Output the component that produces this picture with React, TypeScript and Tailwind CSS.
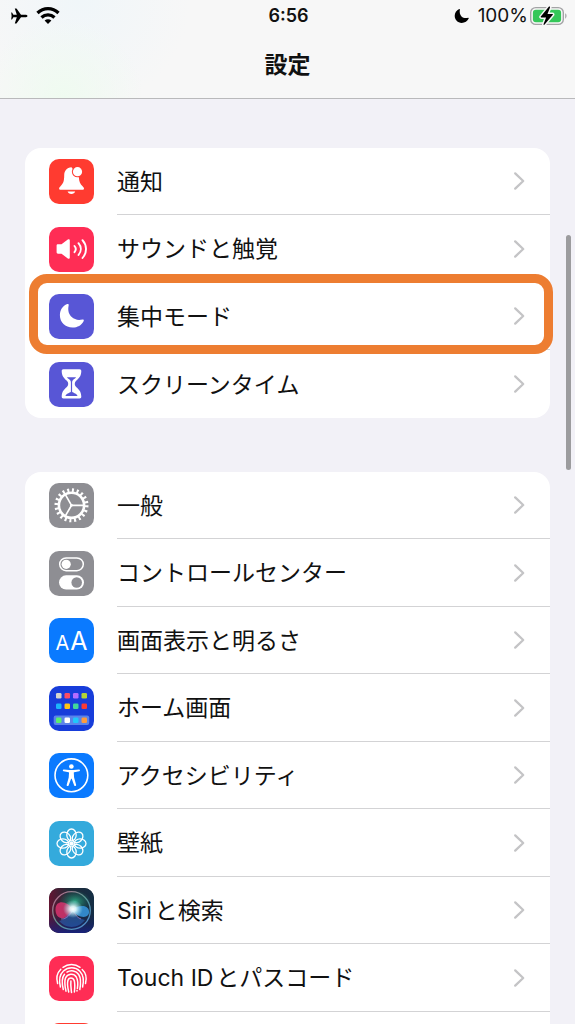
import type { ReactNode } from "react"

type Item = {
  id: string
  label: string
  color: string
  icon: ReactNode
  selected?: boolean
}

const BellIcon = () => (
  <svg viewBox="0 0 45 45" className="size-full" fill="#fff">
    <path d="M22.500 8.300c-4.700 0-7.300 3.700-7.300 8.200 0 6-1.200 8.300-3.700 10.700-1 1-1.400 1.600-1.400 2.300 0 .8.600 1.300 1.500 1.300h21.900c.9 0 1.500-.5 1.500-1.300 0-.7-.5-1.300-1.400-2.300-2.500-2.400-3.500-4.700-3.700-8.700z" />
    <path d="M18.600 32.400h7.600c-.5 1.600-1.900 2.500-3.800 2.500s-3.300-.9-3.800-2.500z" />
    <circle cx="28.500" cy="12.700" r="5.600" fill="#ff3b30" />
    <circle cx="28.500" cy="12.700" r="4.600" />
  </svg>
)

const SpeakerIcon = () => (
  <svg viewBox="0 0 45 45" className="size-full" fill="none" stroke="#fff" strokeWidth="1.900" strokeLinecap="round">
    <path d="M9 17.300h3.500l6.300-4.700c1-.7 2-.2 2 1v16.800c0 1.200-1 1.700-2 1l-6.300-4.700H9c-.9 0-1.400-.5-1.400-1.400v-6.600c0-.9.500-1.400 1.400-1.400z" fill="#fff" stroke="none" />
    <path d="M25.500 19c1.600 1.900 1.600 4.300 0 6.200M29.500 16.200c3.100 3.600 3.100 8.200 0 11.800M33.500 13.200c4.700 5.400 4.700 12.400 0 17.800" />
  </svg>
)

const MoonIcon = () => (
  <svg viewBox="0 0 45 45" className="size-full" fill="#fff">
    <path d="M18.200 10.100c.8-.4 1.700.2 1.500 1.100-1.200 5.300.2 9.100 3 11.900 2.900 2.600 6.500 3.400 10.900 2.400.9-.2 1.500.5 1.100 1.400-2 4.200-6.200 6.600-11.200 6.600-7.200 0-12.600-5.300-12.600-12.300 0-5.100 2.800-9.300 7.300-11.100z" />
  </svg>
)

const HourglassIcon = () => (
  <svg viewBox="0 0 45 45" className="size-full" fill="#fff">
    <path d="M14.500 7.300h16c1.300 0 1.900.8 1.800 2-.1 5.200-2.600 7.200-5.200 9.500-1.800 1.600-1.800 4.700 0 6.300 2.600 2.300 5.100 4.300 5.200 9.500.1 1.200-.5 2-1.800 2h-16c-1.300 0-1.900-.8-1.800-2 .1-5.200 2.600-7.200 5.200-9.500 1.800-1.600 1.800-4.700 0-6.300-2.600-2.300-5.100-4.300-5.200-9.500-.1-1.200.5-2 1.800-2z" />
    <path d="M18 15.300h9c-.5.900-1.500 1.500-2.500 2.300-1.100.9-1.400 1.800-1.400 3v9.200c1.200 1.300 4.700 1.700 5.400 4.200H16.500c.7-2.500 4.200-2.900 5.400-4.200v-9.200c0-1.200-.3-2.100-1.400-3-1-.8-2-1.400-2.500-2.300z" fill="#5856d6" />
  </svg>
)

const GearIcon = () => (
  <svg viewBox="0 0 45 45" className="size-full" fill="none" stroke="#fff">
    <circle cx="22.500" cy="22.300" r="15" strokeWidth="4" strokeDasharray="2 2.712" />
    <circle cx="22.500" cy="22.300" r="12.600" strokeWidth="2.600" />
    <path d="M22.500 22.300h12M22.500 22.300l-6-10.400M22.500 22.300l-6 10.400" strokeWidth="1.700" />
    <circle cx="22.500" cy="22.300" r="1.400" fill="#fff" stroke="none" />
  </svg>
)

const TogglesIcon = () => (
  <svg viewBox="0 0 45 45" className="size-full" fill="#fff">
    <rect x="10.700" y="6.900" width="23.600" height="12.800" rx="6.400" fill="none" stroke="#fff" strokeWidth="1.500" />
    <circle cx="17.200" cy="13.300" r="4.600" />
    <rect x="10" y="24.300" width="25" height="14.300" rx="7.150" />
    <circle cx="27.700" cy="31.450" r="5.300" fill="#8e8e93" />
  </svg>
)

const TextSizeIcon = () => (
  <span className="flex size-full items-baseline justify-center gap-px pt-2 text-white">
    <span className="text-xl leading-[30px]">A</span>
    <span className="text-[25px] leading-[30px]">A</span>
  </span>
)

const appColors = [
  ["#d5d6cf", "#fb4d63", "#b56cff", "#b4d335"],
  ["#1cb5fb", "#ffc414", "#42d69b", "#fb3a34"],
  ["#5bee70", "#ffffff", "#20c6fb", "#ff9b3d"],
]
const appRows = [7, 17.5, 31.5]

const HomeScreenIcon = () => (
  <svg viewBox="0 0 45 45" className="size-full">
    <rect x="4.700" y="29.500" width="35.500" height="9.500" rx="2" fill="#5b83ea" />
    {appColors.map((row, r) =>
      row.map((fill, c) => (
        <rect key={fill} x={7 + c * 8.5} y={appRows[r]} width="5.500" height="5.500" rx="1.300" fill={fill} />
      ))
    )}
  </svg>
)

const AccessibilityIcon = () => (
  <svg viewBox="0 0 45 45" className="size-full" fill="#fff">
    <circle cx="22.400" cy="22.300" r="16.400" fill="none" stroke="#fff" strokeWidth="1.600" />
    <circle cx="22.400" cy="13.500" r="2.300" />
    <path d="M14.800 16.500l5.600.6h4l5.600-.6c1.200-.1 1.300 1.600.2 1.800l-5 .9c-.4.100-.5.300-.4.700l.3 4.500 2 7.300c.4 1.400-1.400 2-1.900.7l-2.500-6.700h-.6l-2.500 6.700c-.5 1.300-2.300.7-1.900-.7l2-7.300.3-4.500c0-.4 0-.6-.4-.7l-5-.9c-1.100-.2-1-1.900.2-1.800z" />
  </svg>
)

const petals = [0, 45, 90, 135, 180, 225, 270, 315]

const FlowerIcon = () => (
  <svg viewBox="0 0 45 45" className="size-full" fill="none" stroke="#fff" strokeWidth="1.300">
    {petals.map((angle) => (
      <ellipse key={angle} cx="22.500" cy="13.900" rx="4.700" ry="5.900" transform={`rotate(${angle} 22.500 22.500)`} />
    ))}
    <circle cx="22.500" cy="22.500" r="2.100" fill="#fff" stroke="none" />
  </svg>
)

const SiriIcon = () => (
  <svg viewBox="0 0 45 45" className="size-full">
    <defs>
      <linearGradient id="siri-bg" x1="0" y1="0" x2="1" y2="0">
        <stop offset="0" stopColor="#641532" />
        <stop offset="0.450" stopColor="#202b38" />
        <stop offset="1" stopColor="#142e45" />
      </linearGradient>
      <linearGradient id="siri-base" x1="0" y1="0" x2="0" y2="1">
        <stop offset="0.550" stopColor="#17195c" stopOpacity="0" />
        <stop offset="1" stopColor="#18208a" stopOpacity="0.800" />
      </linearGradient>
      <linearGradient id="siri-ring" x1="0" y1="0" x2="1" y2="1">
        <stop offset="0" stopColor="#c8628a" />
        <stop offset="0.500" stopColor="#5a9a92" />
        <stop offset="1" stopColor="#4a86dc" />
      </linearGradient>
      <radialGradient id="siri-glow">
        <stop offset="0" stopColor="#fff" />
        <stop offset="0.300" stopColor="#e8ffff" stopOpacity="0.900" />
        <stop offset="1" stopColor="#9ce4f0" stopOpacity="0" />
      </radialGradient>
      <radialGradient id="siri-green">
        <stop offset="0" stopColor="#2fb58c" stopOpacity="0.900" />
        <stop offset="1" stopColor="#1a7060" stopOpacity="0.100" />
      </radialGradient>
    </defs>
    <rect width="45" height="45" fill="url(#siri-bg)" />
    <rect width="45" height="45" fill="url(#siri-base)" />
    <ellipse cx="26" cy="13.500" rx="15" ry="10.500" fill="url(#siri-green)" />
    <path d="M24 22c-5-9-17-11-17.500-1S16 35 24 22z" fill="#ed3676" fillOpacity="0.750" />
    <path d="M22 22c7-5 17-6 18 1s-9 9-18-1z" fill="#3798e0" fillOpacity="0.850" />
    <path d="M10 33c5-1 8-6 13-11 3 6 8 9 13 10-7 9-19 9-26 1z" fill="#2b70cc" fillOpacity="0.500" />
    <path d="M12 31c6 0 9-4 12-9 2 5 5 8 8 9" fill="none" stroke="#c487d4" strokeOpacity="0.600" />
    <ellipse cx="24" cy="21" rx="10" ry="9" fill="url(#siri-glow)" />
    <circle cx="22.500" cy="22.500" r="18.800" fill="none" stroke="url(#siri-ring)" strokeWidth="1.300" />
  </svg>
)

const FingerprintIcon = () => (
  <svg viewBox="0 0 45 45" className="size-full" fill="none" stroke="#fff" strokeWidth="1.500" strokeLinecap="round">
    <path d="M14 11.300C19 7.400 26 7.400 31 11.300M11.800 13.200C8 17 7 22 8.600 27.500M33.200 13.500C37 17 38 22 36.500 27.500" />
    <path d="M11.400 31C9.700 24 10.600 18.500 14.500 15C19.500 10.500 26.500 10.800 30.800 15.200C34.500 19 35 25 33.600 31" />
    <path d="M14.300 33.500C12.700 27 12.500 22 15.500 18.300M18 16.200C22 13.600 27 14.600 29.700 18.500C32 22 31.800 28 30.800 33.500" />
    <path d="M17 35.200C15.800 30 15.300 25 16.500 22C18.500 17.500 24.800 17 27.300 21C29 24 28.900 29 28.400 32.500M28 34.500v.6" />
    <path d="M19.700 36C18.500 31 18.200 27 18.900 24.500C19.800 21 24 21 25.200 24.500C26 27 25.800 32 25.400 36" />
    <path d="M22.500 36.500C22 32 21.500 29 21.900 25" />
  </svg>
)

const Chevron = () => (
  <svg viewBox="0 0 12 20" className="h-5 w-3" fill="none" stroke="#c4c4c6" strokeWidth="2.300" strokeLinecap="round" strokeLinejoin="round">
    <path d="M2.200 2.400l8 7.600-8 7.600" />
  </svg>
)

const StatusBar = () => (
  <div className="grid h-8 grid-cols-3 items-center pl-[10px] pr-2">
    <div className="flex items-center gap-2">
      <svg viewBox="0 0 18 16" className="h-4 w-[18px]">
        <path d="M17.500 8c0-.8-1.200-1.300-2.500-1.300h-4L6.700.8C6.500.5 6.200.4 5.800.4h-1l2 6.300H3.400L2 4.600H1.200L1.600 8l-.4 3.400H2l1.400-2.100h3.400l-2 6.300h1c.4 0 .7-.1.900-.4L11 9.300h4c1.300 0 2.500-.5 2.500-1.300z" />
      </svg>
      <svg viewBox="0 0 24 18" className="h-[18px] w-6" fill="none" stroke="#000" strokeWidth="3.300">
        <path d="M1.500 6C7.500.2 16.500.2 22.500 6M5.500 10.500c3.700-3.500 9.300-3.500 13 0" />
        <path d="M8.600 13.500c2-1.700 4.800-1.700 6.800 0L12 17z" fill="#000" stroke="none" />
      </svg>
    </div>
    <time className="text-center text-lg font-semibold">6:56</time>
    <div className="flex items-center justify-end">
      <svg viewBox="0 0 16 16" className="mr-2 size-4">
        <path d="M5.200 1c.4-.2.800.1.700.6-.6 3 .1 5.200 1.600 6.800 1.600 1.500 4 2 6.600 1.300.5-.1.800.3.600.8-1.200 2.700-3.900 4.400-7 4.400C3.700 14.900.7 11.800.7 7.800.7 4.800 2.400 2.200 5.200 1z" />
      </svg>
      <span className="mr-px text-[19px]">100%</span>
      <svg viewBox="0 0 38 20" className="h-5 w-[38px]">
        <rect x="1.700" y="1.600" width="32.600" height="16.800" rx="5" fill="none" stroke="#a3a3a5" strokeWidth="1.400" />
        <rect x="3.900" y="3.800" width="28.200" height="12.400" rx="3" fill="#34c759" />
        <path d="M36.200 7.300v5.400c1.800-.8 1.800-4.600 0-5.400z" fill="#a3a3a5" />
        <path d="M19.800.8l-8 9.800c-.3.400-.1.800.4.800h4.900L14.600 18c-.3.900.4 1.200 1 .6l8.200-9.800c.3-.4.100-.8-.4-.8h-4.900L21 1.500c.3-.9-.6-1.300-1.200-.7z" stroke="#f7f7f7" strokeWidth="3" paintOrder="stroke" />
      </svg>
    </div>
  </div>
)

const SettingRow = ({ item }: { item: Item }) => (
  <li className="group relative odd:h-[67px] even:h-[68px]">
    <a href={`#${item.id}`} className="flex h-full items-center pl-6">
      <span className={`size-[45px] shrink-0 overflow-hidden rounded-[10px] ${item.color}`}>{item.icon}</span>
      <span className="ml-[23px] flex h-full flex-1 items-center justify-between border-b border-[#d3d3d5] pr-[25px] group-last:border-b-0">
        <span className="pt-[2px]">{item.label}</span>
        <Chevron />
      </span>
    </a>
    {item.selected && (
      <div className="pointer-events-none absolute -bottom-1 -right-[3px] -top-[9px] left-1 z-10 rounded-[18px] border-[9px] border-[#ed7d31]" />
    )}
  </li>
)

const alertItems: Item[] = [
  { id: "notifications", label: "通知", color: "bg-[#ff3b30]", icon: <BellIcon /> },
  { id: "sounds", label: "サウンドと触覚", color: "bg-[#ff2d55]", icon: <SpeakerIcon /> },
  { id: "focus", label: "集中モード", color: "bg-[#5856d6]", icon: <MoonIcon />, selected: true },
  { id: "screen-time", label: "スクリーンタイム", color: "bg-[#5856d6]", icon: <HourglassIcon /> },
]

const generalItems: Item[] = [
  { id: "general", label: "一般", color: "bg-[#8e8e93]", icon: <GearIcon /> },
  { id: "control-center", label: "コントロールセンター", color: "bg-[#8e8e93]", icon: <TogglesIcon /> },
  { id: "display", label: "画面表示と明るさ", color: "bg-[#0a7aff]", icon: <TextSizeIcon /> },
  { id: "home-screen", label: "ホーム画面", color: "bg-[#173dda]", icon: <HomeScreenIcon /> },
  { id: "accessibility", label: "アクセシビリティ", color: "bg-[#0a7aff]", icon: <AccessibilityIcon /> },
  { id: "wallpaper", label: "壁紙", color: "bg-[#34aadc]", icon: <FlowerIcon /> },
  { id: "siri", label: "Siriと検索", color: "bg-[#202b38]", icon: <SiriIcon /> },
  { id: "touch-id", label: "Touch IDとパスコード", color: "bg-[#ff2d55]", icon: <FingerprintIcon /> },
  { id: "sos", label: "", color: "bg-[#ff3b30]", icon: null },
]

const App = () => {
  return (
    <div className="relative flex h-screen flex-col overflow-hidden bg-[#f2f1f7] font-['Inter','Noto_Sans_CJK_JP',sans-serif] text-[#111] [text-autospace:normal]">
      <header className="shrink-0 border-b border-[#b9b9bb] bg-[#f7f7f7] bg-[radial-gradient(circle_at_11%_100%,#effbf0,transparent_80px),radial-gradient(circle_at_14%_0%,#f0f6f9,transparent_110px)] pb-[15px]">
        <StatusBar />
        <h1 className="pt-[15px] text-center text-[23px] font-bold leading-9">設定</h1>
      </header>
      <main className="flex flex-col gap-[54px] px-[25px] pt-[49px] text-[23px]">
        <ul className="rounded-2xl bg-white">
          {alertItems.map((item) => (
            <SettingRow key={item.id} item={item} />
          ))}
        </ul>
        <ul className="rounded-2xl bg-white">
          {generalItems.map((item) => (
            <SettingRow key={item.id} item={item} />
          ))}
        </ul>
      </main>
      <div className="absolute right-1 top-[235px] h-[235px] w-[5px] rounded-full bg-[#9c9c9e]" />
    </div>
  )
}

export default App
